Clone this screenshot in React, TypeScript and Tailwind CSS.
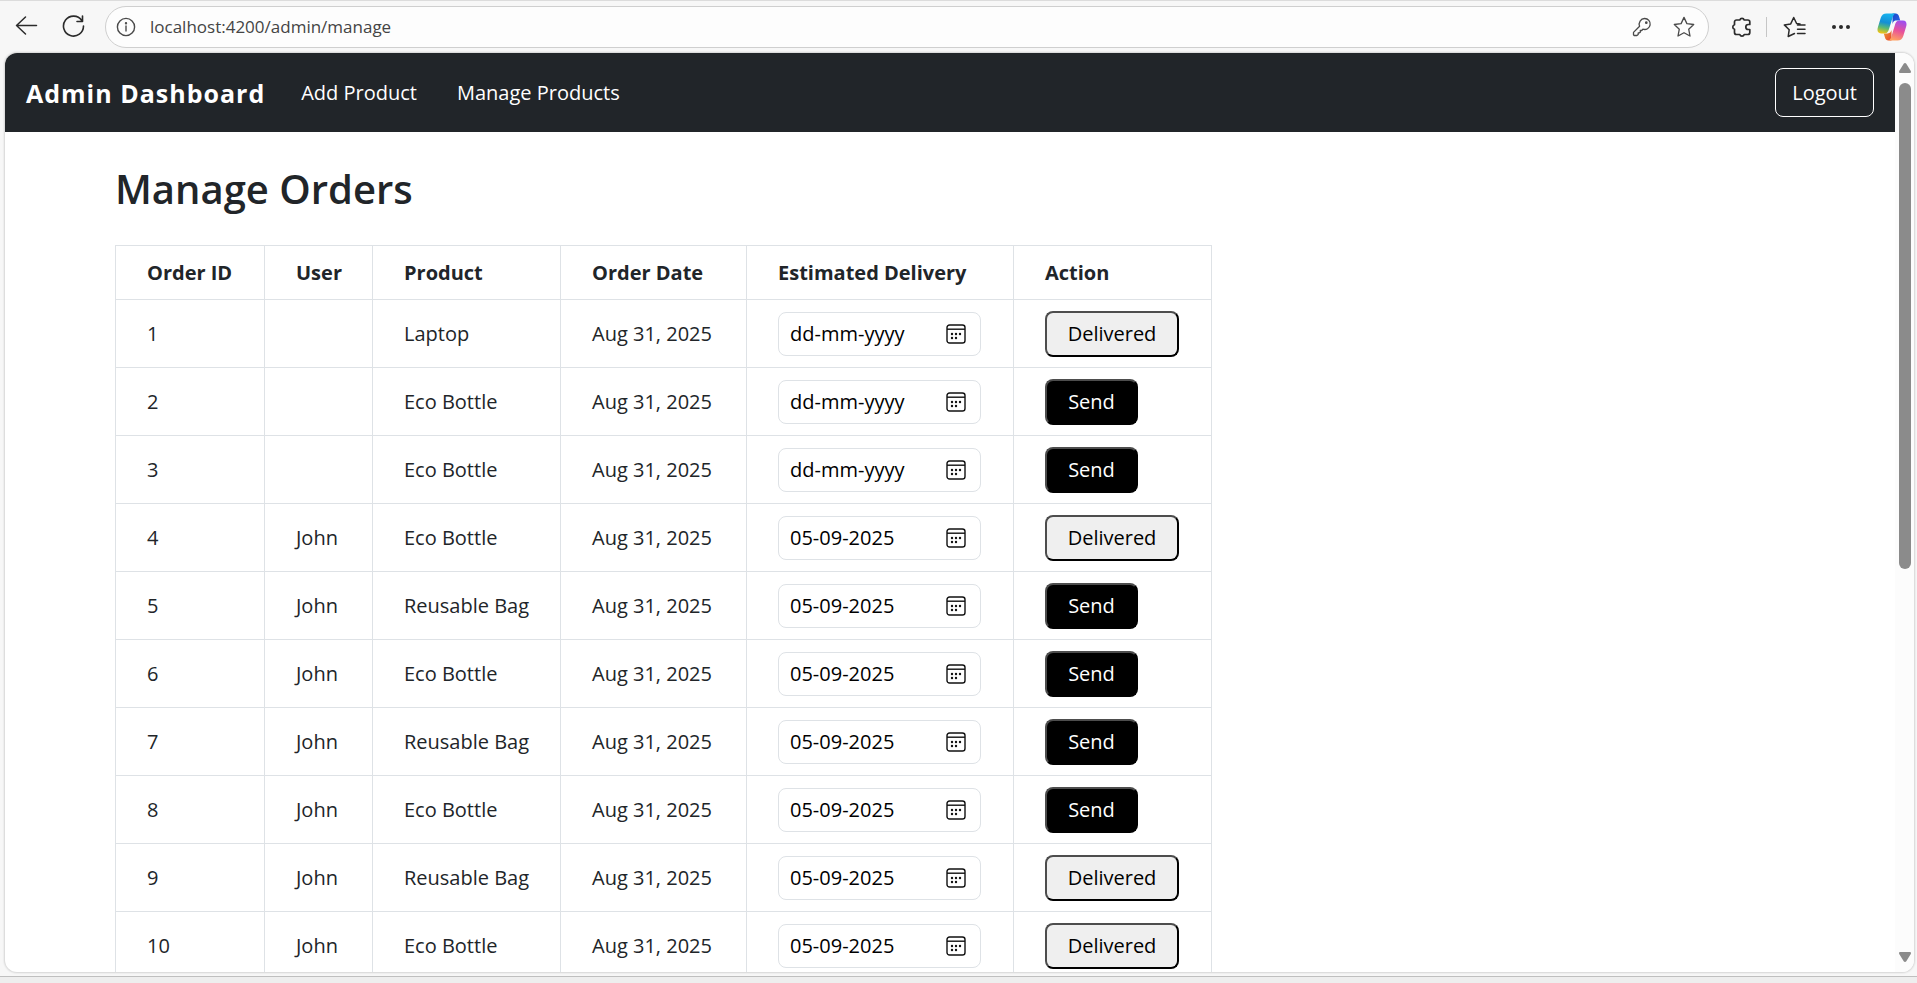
import React from "react";

type Order = { id: number; user: string; product: string; date: string; delivery: string; delivered: boolean };

const orders: Order[] = [
  { id: 1, user: "", product: "Laptop", date: "Aug 31, 2025", delivery: "", delivered: true },
  { id: 2, user: "", product: "Eco Bottle", date: "Aug 31, 2025", delivery: "", delivered: false },
  { id: 3, user: "", product: "Eco Bottle", date: "Aug 31, 2025", delivery: "", delivered: false },
  { id: 4, user: "John", product: "Eco Bottle", date: "Aug 31, 2025", delivery: "05-09-2025", delivered: true },
  { id: 5, user: "John", product: "Reusable Bag", date: "Aug 31, 2025", delivery: "05-09-2025", delivered: false },
  { id: 6, user: "John", product: "Eco Bottle", date: "Aug 31, 2025", delivery: "05-09-2025", delivered: false },
  { id: 7, user: "John", product: "Reusable Bag", date: "Aug 31, 2025", delivery: "05-09-2025", delivered: false },
  { id: 8, user: "John", product: "Eco Bottle", date: "Aug 31, 2025", delivery: "05-09-2025", delivered: false },
  { id: 9, user: "John", product: "Reusable Bag", date: "Aug 31, 2025", delivery: "05-09-2025", delivered: true },
  { id: 10, user: "John", product: "Eco Bottle", date: "Aug 31, 2025", delivery: "05-09-2025", delivered: true },
];

const columns = [
  { label: "Order ID", width: "w-[149px]" },
  { label: "User", width: "w-[108px]" },
  { label: "Product", width: "w-[188px]" },
  { label: "Order Date", width: "w-[186px]" },
  { label: "Estimated Delivery", width: "w-[267px]" },
  { label: "Action", width: "w-[198px]" },
];

const stroke = { fill: "none", stroke: "currentColor", strokeLinecap: "round", strokeLinejoin: "round" } as const;

function BackIcon() {
  return (
    <svg width="24" height="24" viewBox="0 0 24 24" {...stroke} strokeWidth="1.5">
      <path d="M22.500 12.500H2.500M11.500 4 2.500 12.500l9 8.500" />
    </svg>
  );
}

function ReloadIcon() {
  return (
    <svg width="24" height="24" viewBox="0 0 24 24" {...stroke} strokeWidth="1.6">
      <path d="M21.500 13A10 10 0 1 1 19.800 7.500M20.500 3v5.500H15" />
    </svg>
  );
}

function InfoIcon() {
  return (
    <svg width="20" height="20" viewBox="0 0 20 20" {...stroke} strokeWidth="1.4">
      <circle cx="10" cy="10" r="8.6" />
      <path d="M10 9v5" />
      <circle cx="10" cy="6.2" r="0.5" fill="currentColor" />
    </svg>
  );
}

function KeyIcon() {
  return (
    <svg width="20" height="20" viewBox="0 0 20 20" {...stroke} strokeWidth="1.3">
      <path d="M12.600 1.500a5.500 5.500 0 1 1-1.700 10.700L9.700 13.500H8.300v1.700l-1 .7H6.200v1.500l-1.300 1.100H2.200l-.7-.8v-2.300l6.100-6.200a5.600 5.600 0 0 1 5-7.700Z" />
      <circle cx="14.300" cy="5.700" r="0.7" fill="currentColor" />
    </svg>
  );
}

function StarIcon() {
  return (
    <svg width="22" height="22" viewBox="0 0 22 22" {...stroke} strokeWidth="1.3">
      <path d="m11 1.4 2.9 6.2 6.8.9-5 4.7 1.3 6.8-6-3.3-6 3.3 1.3-6.8-5-4.7 6.8-.9Z" />
    </svg>
  );
}

function PuzzleIcon() {
  return (
    <svg width="22" height="22" viewBox="0 0 22 22" {...stroke} strokeWidth="1.7">
      <path d="M5.500 4H8.800a2.300 2.300 0 0 1 4.400 0H16.800a2 2 0 0 1 2 2V8.500H17.300a2.500 2.500 0 0 0 0 5H18.800V16.500a2 2 0 0 1-2 2H13.200a2.300 2.300 0 0 1-4.400 0H5.500a2 2 0 0 1-2-2V13.300a2.400 2.400 0 0 1 0-4.600V6a2 2 0 0 1 2-2Z" />
    </svg>
  );
}

function FavoritesIcon() {
  return (
    <svg width="23" height="22" viewBox="0 0 23 22" {...stroke} strokeWidth="1.5">
      <path d="M11.500 17.500 5.200 20.500l1-6.800-4.900-4.800 6.400-1L10.700 1.500l2.900 6L17 8M14.500 9h7.500M14.500 13.300h7.500M14.500 17.600h7.500" />
    </svg>
  );
}

function CopilotIcon() {
  return (
    <svg width="30" height="28" viewBox="0 0 30 28">
      <defs>
        <linearGradient id="cpBlue" x1="0.5" y1="0" x2="0.3" y2="1">
          <stop offset="0" stopColor="#18b3ee" />
          <stop offset="0.45" stopColor="#148fd6" />
          <stop offset="0.72" stopColor="#5bb974" />
          <stop offset="1" stopColor="#f2c414" />
        </linearGradient>
        <linearGradient id="cpNavy" x1="0" y1="0" x2="1" y2="1">
          <stop offset="0" stopColor="#1b48c8" />
          <stop offset="1" stopColor="#2a63e8" />
        </linearGradient>
        <linearGradient id="cpPink" x1="0.7" y1="0" x2="0.4" y2="1">
          <stop offset="0" stopColor="#9d4ef0" />
          <stop offset="0.5" stopColor="#e8519a" />
          <stop offset="1" stopColor="#ffa25f" />
        </linearGradient>
        <linearGradient id="cpRed" x1="0" y1="0" x2="1" y2="1">
          <stop offset="0" stopColor="#f0a030" />
          <stop offset="1" stopColor="#e5432f" />
        </linearGradient>
      </defs>
      <path d="M15.500 0.500H18.500C20.800 .5 21.600 2 22.200 4L23.200 7.600H20.500C17.500 7.600 16.500 8 15.500 11Z" fill="url(#cpNavy)" />
      <path d="M14.500 27.500H11.500C9.200 27.500 8.400 26 7.800 24L6.800 20.400H9.500C12.500 20.400 13.500 20 14.500 17Z" fill="url(#cpRed)" />
      <path d="M9.500 .5H19C16.800 .8 16 3 15.200 5.700L12.200 15.500C11 19.500 9.800 20.400 7 20.400H4C.6 20.400-.1 17.500.9 14.200L3.700 5C4.700 1.900 6.600.5 9.500.5Z" fill="url(#cpBlue)" />
      <path d="M20.500 27.500H11C13.200 27.200 14 25 14.800 22.300L17.800 12.500C19 8.500 20.200 7.600 23 7.600H26C29.400 7.600 30.100 10.500 29.100 13.800L26.300 23C25.300 26.100 23.400 27.500 20.500 27.500Z" fill="url(#cpPink)" />
    </svg>
  );
}

function CalendarIcon() {
  return (
    <svg width="20" height="20" viewBox="0 0 20 20" fill="none" stroke="#111" strokeWidth="1.4">
      <rect x="1" y="1" width="18" height="18" rx="2.600" />
      <path d="M1 5.200h18" />
      <g fill="#111" stroke="none">
        <circle cx="6" cy="10" r="1.200" />
        <circle cx="10" cy="10" r="1.200" />
        <circle cx="14" cy="10" r="1.200" />
        <circle cx="6" cy="14" r="1.200" />
        <circle cx="10" cy="14" r="1.200" />
      </g>
    </svg>
  );
}

function BrowserBar() {
  return (
    <div className="flex h-[53px] shrink-0 items-center border-t border-[#dcdcdc] pr-[10px] pl-[14px] text-[#2b2b2b]">
      <div className="flex items-center gap-6 pb-1">
        <button aria-label="Back"><BackIcon /></button>
        <button aria-label="Reload"><ReloadIcon /></button>
      </div>
      <div className="ml-[19px] flex h-[42px] min-w-0 flex-1 items-center rounded-full border border-[#cfcfcf] bg-[#fdfdfd] pl-[10px] pr-[13px] text-[#4a4a4a]">
        <InfoIcon />
        <input
          aria-label="Address"
          readOnly
          value="localhost:4200/admin/manage"
          className="ml-[14px] min-w-0 flex-1 bg-transparent text-[17px] leading-6 text-[#444] outline-none"
        />
        <button aria-label="Saved passwords"><KeyIcon /></button>
        <button aria-label="Add to favorites" className="ml-[21px]"><StarIcon /></button>
      </div>
      <button aria-label="Extensions" className="ml-[22px]"><PuzzleIcon /></button>
      <span className="ml-[13px] h-5 w-px bg-[#c6c6c6]" />
      <button aria-label="Favorites" className="ml-4"><FavoritesIcon /></button>
      <button aria-label="Settings and more" className="ml-[26px] flex w-[18px] justify-between">
        <span className="size-1 rounded-full bg-[#2b2b2b]" />
        <span className="size-1 rounded-full bg-[#2b2b2b]" />
        <span className="size-1 rounded-full bg-[#2b2b2b]" />
      </button>
      <button aria-label="Copilot" className="ml-[27px]"><CopilotIcon /></button>
    </div>
  );
}

function Navbar() {
  return (
    <nav className="flex h-[79px] items-center bg-[#212529] px-[21px] text-[20px] leading-[30px] text-white">
      <a href="#" className="text-[25px] font-bold tracking-[1px]">Admin Dashboard</a>
      <a href="#add" className="ml-9">Add Product</a>
      <a href="#manage" className="ml-10">Manage Products</a>
      <button className="ml-auto h-[49px] rounded-[8px] border border-white px-4">Logout</button>
    </nav>
  );
}

function OrderRow({ order }: { order: Order }) {
  return (
    <tr className="h-[68px]">
      <td className="border border-[#dee2e6] px-[31px]">{order.id}</td>
      <td className="border border-[#dee2e6] px-[31px]">{order.user}</td>
      <td className="whitespace-nowrap border border-[#dee2e6] px-[31px]">{order.product}</td>
      <td className="whitespace-nowrap border border-[#dee2e6] px-[31px]">{order.date}</td>
      <td className="border border-[#dee2e6] px-[31px]">
        <div className="flex h-11 w-[203px] items-center rounded-[8px] border border-[#dee2e6] pl-[11px] pr-[14px] text-black">
          <input
            type="text"
            aria-label={`Estimated delivery for order ${order.id}`}
            placeholder="dd-mm-yyyy"
            defaultValue={order.delivery}
            className="min-w-0 flex-1 bg-transparent outline-none placeholder:text-black placeholder:opacity-100"
          />
          <button aria-label="Open calendar"><CalendarIcon /></button>
        </div>
      </td>
      <td className="border border-[#dee2e6] px-[31px]">
        {order.delivered ? (
          <button className="block h-[46px] w-[134px] rounded-[8px] border-2 border-b-black border-l-[#4d4d4d] border-r-black border-t-[#4d4d4d] bg-[#efefef] text-black">
            Delivered
          </button>
        ) : (
          <button className="block h-[46px] w-[93px] rounded-[8px] border-2 border-b-black border-l-[#4d4d4d] border-r-black border-t-[#4d4d4d] bg-black text-white">
            Send
          </button>
        )}
      </td>
    </tr>
  );
}

function Scrollbar() {
  return (
    <div aria-hidden="true" className="flex w-[19px] shrink-0 flex-col items-center bg-[#fcfcfc] py-[10px] text-[#8b8b8b]">
      <svg width="12" height="10" viewBox="0 0 12 10" fill="currentColor"><path d="M6 0 Q6.800 0 7.300.8L11.800 8Q12.400 10 11 10H1Q-.4 10 .2 8L4.700.8Q5.200 0 6 0Z" /></svg>
      <div className="my-[10px] w-3 flex-1">
        <div className="h-13/23 rounded-full bg-[#8b8b8b]" />
      </div>
      <svg width="12" height="10" viewBox="0 0 12 10" fill="currentColor"><path d="M6 10 Q6.800 10 7.300 9.200L11.800 2Q12.400 0 11 0H1Q-.4 0 .2 2L4.700 9.200Q5.200 10 6 10Z" /></svg>
    </div>
  );
}

export default function App() {
  return (
    <div className="flex h-screen flex-col overflow-hidden bg-[#f7f7f7] font-['Open_Sans','Noto_Sans',sans-serif]">
      <BrowserBar />
      <div className="ml-[5px] mr-[3px] flex min-h-0 flex-1 overflow-hidden rounded-[12px] bg-white shadow-[0_0_2px_1px_rgba(0,0,0,0.14)]">
        <div className="min-w-0 flex-1 overflow-hidden">
          <Navbar />
          <main className="pl-[110px] pt-[33px] text-[20px] leading-[30px] text-[#212529]">
            <h2 className="mb-8 text-[40px] font-semibold leading-[48px]">Manage Orders</h2>
            <table className="w-[1096px] table-fixed border-collapse">
              <thead>
                <tr className="h-[54px]">
                  {columns.map((c) => (
                    <th key={c.label} className={`${c.width} whitespace-nowrap border border-[#dee2e6] px-[31px] text-left font-bold`}>
                      {c.label}
                    </th>
                  ))}
                </tr>
              </thead>
              <tbody>
                {orders.map((o) => <OrderRow key={o.id} order={o} />)}
              </tbody>
            </table>
          </main>
        </div>
        <Scrollbar />
      </div>
      <div className="mt-1 h-[7px] shrink-0 border-t border-[#bfbfbf] bg-[#eee]" />
    </div>
  );
}
